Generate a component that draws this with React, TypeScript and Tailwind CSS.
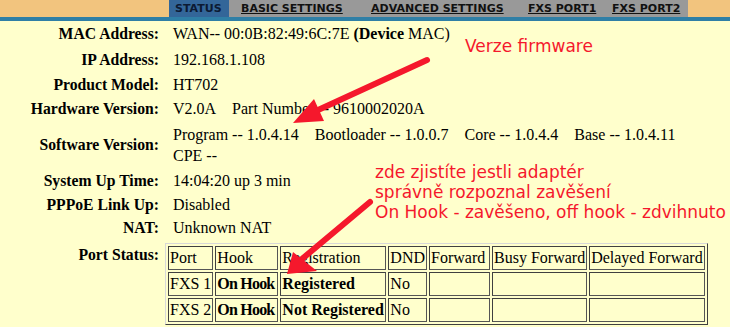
import React from 'react';

const tabs = [
  { label: 'STATUS', active: true, cls: 'w-[60px] pl-[6px]' },
  { label: 'BASIC SETTINGS', active: false, cls: 'w-[127px] pl-[12px]' },
  { label: 'ADVANCED SETTINGS', active: false, cls: 'w-[159px] pl-[15px]' },
  { label: 'FXS PORT1', active: false, cls: 'w-[89px] pl-[13px]' },
  { label: 'FXS PORT2', active: false, cls: 'w-[84px] pl-[8px]' },
];

const Row = ({ label, h, children }: { label: string; h: string; children: React.ReactNode }) => (
  <div className={`flex items-center ${h}`}>
    <div className="w-[159px] text-right text-[15.7px] font-bold">{label}:</div>
    <div className="pl-[14px] whitespace-nowrap">{children}</div>
  </div>
);

const cell = 'border border-t-[#404040] border-l-[#404040] border-b-[#555] border-r-[#555] px-[1px] h-[24px] text-left whitespace-nowrap';

export default function App() {
  return (
    <div className="relative w-[730px] h-[327px] overflow-hidden bg-[#ffffcc] text-black text-[16px] leading-[18px] font-['Liberation_Serif',serif]">
      {/* top nav */}
      <div className="flex h-[17px] bg-[#f2c47e]">
        <div className="ml-[169px] flex h-full w-[519px] bg-[#999999] font-['DejaVu_Sans',sans-serif] text-[11px] font-bold leading-[17px] whitespace-nowrap">
          {tabs.map((t) =>
            t.active ? (
              <span key={t.label} className={`${t.cls} bg-[#336699] text-[#0c1a33]`}>{t.label}</span>
            ) : (
              <span key={t.label} className={t.cls}>
                <span className="underline text-[#111]">{t.label}</span>
              </span>
            )
          )}
        </div>
      </div>
      <div className="h-[4px] bg-[#2f7fa6]" />

      <div className="flex flex-col">
        <Row label="MAC Address" h="h-[26px]">
          WAN-- 00:0B:82:49:6C:7E <b>(Device</b> MAC)
        </Row>
        <Row label="IP Address" h="h-[25px]">192.168.1.108</Row>
        <Row label="Product Model" h="h-[25px]">HT702</Row>
        <Row label="Hardware Version" h="h-[24px]">
          <span>V2.0A</span>
          <span className="ml-[16px]">Part Number -- 9610002020A</span>
        </Row>
        <Row label="Software Version" h="h-[47px]">
          <div className="leading-[21px]">
            <div className="flex gap-[16px]">
              <span>Program -- 1.0.4.14</span>
              <span>Bootloader -- 1.0.0.7</span>
              <span>Core -- 1.0.4.4</span>
              <span>Base -- 1.0.4.11</span>
            </div>
            <div>CPE --</div>
          </div>
        </Row>
        <Row label="System Up Time" h="h-[25px]">14:04:20 up 3 min</Row>
        <Row label="PPPoE Link Up" h="h-[23px]">Disabled</Row>
        <Row label="NAT" h="h-[24px]">Unknown NAT</Row>
        <div className="flex">
          <div className="w-[159px] pt-[6px] text-right text-[15.7px] font-bold">Port Status:</div>
          <div className="pl-[6px] pt-[3px]">
            <table className="border border-t-[#d8d8d8] border-l-[#d8d8d8] border-b-[#404040] border-r-[#404040] border-separate border-spacing-[2px]">
              <thead>
                <tr>
                  <th className={`${cell} font-normal w-[45px]`}>Port</th>
                  <th className={`${cell} font-normal w-[63px]`}>Hook</th>
                  <th className={`${cell} font-normal w-[106px]`}>Registration</th>
                  <th className={`${cell} font-normal w-[38px]`}>DND</th>
                  <th className={`${cell} font-normal w-[61px] text-center`}>Forward</th>
                  <th className={`${cell} font-normal w-[95px] text-center`}>Busy Forward</th>
                  <th className={`${cell} font-normal w-[115px] text-center`}>Delayed Forward</th>
                </tr>
              </thead>
              <tbody>
                {[
                  ['FXS 1', 'Registered'],
                  ['FXS 2', 'Not Registered'],
                ].map(([p, r]) => (
                  <tr key={p}>
                    <td className={cell}>{p}</td>
                    <td className={`${cell} font-bold tracking-[-0.8px]`}>On Hook</td>
                    <td className={`${cell} font-bold`}>{r}</td>
                    <td className={cell}>No</td>
                    <td className={cell}></td>
                    <td className={cell}></td>
                    <td className={cell}></td>
                  </tr>
                ))}
              </tbody>
            </table>
          </div>
        </div>
      </div>

      {/* annotations */}
      <div className="absolute left-[465px] top-[36px] font-['DejaVu_Sans',sans-serif] text-[17px] leading-[20px] text-[#f5182c]">
        Verze firmware
      </div>
      <div className="absolute left-[375px] top-[162px] font-['DejaVu_Sans',sans-serif] text-[17px] leading-[20px] text-[#f5182c] whitespace-nowrap">
        <div>zde zjistíte jestli adaptér</div>
        <div>správně rozpoznal zavěšení</div>
        <div>On Hook - zavěšeno, off hook - zdvihnuto</div>
      </div>
      <svg className="absolute left-0 top-0" width="730" height="327" viewBox="0 0 730 327">
        <g stroke="#f5182c" strokeWidth="6" strokeLinecap="round" fill="#f5182c">
          <line x1="427" y1="60" x2="305" y2="116" />
          <line x1="370" y1="202" x2="296" y2="264" />
        </g>
        <polygon points="293,123 314,99 324,121" fill="#f5182c" />
        <polygon points="287,274 293,252 317,271" fill="#f5182c" />
      </svg>
    </div>
  );
}
